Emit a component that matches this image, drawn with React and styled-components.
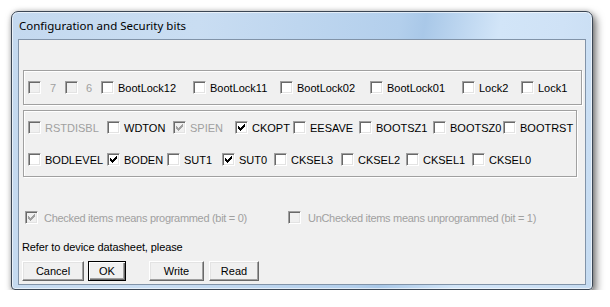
import styled, { createGlobalStyle } from 'styled-components';

const Global = createGlobalStyle`
    body{
        margin: 0;
        background: #ffffff;
        font-family: "Liberation Sans", Arial, sans-serif;
    }
`

const Window = styled.div`
    margin: 11px 0 0 11px;
    width: 582px;
    height: 279px;
    box-sizing: border-box;
    border: 1px solid #3b4654;
    border-radius: 7px 7px 4px 4px;
    background: linear-gradient(100deg, #c4d9ef 0%, #c9ddf2 30%, #b3cfec 62%, #a9c8e8 66%, #d2e5f8 78%, #cfe2f6 88%, #c5dbf1 100%);
    box-shadow: 3px 4px 9px rgba(0,0,0,0.55), 0 0 5px rgba(0,0,0,0.18), inset 0 0 0 1px rgba(255,255,255,0.6);
    display: flex;
    flex-direction: column;
    padding: 0 6px 4px 6px;
`

const TitleBar = styled.div`
    height: 27px;
    display: flex;
    align-items: center;
    padding-left: 1px;
    font-family: "Noto Sans", "Liberation Sans", sans-serif;
    font-size: 11.5px;
    color: #000;
`

const Client = styled.div`
    flex: 1;
    background: #f0f0f0;
    border: 1px solid #8193a8;
    padding: 30px 0 0 4px;
    display: flex;
    flex-direction: column;
    font-size: 11px;
`

const GroupBox = styled.div`
    width: ${p => p.w}px;
    box-sizing: border-box;
    border: 1px solid #a0a0a0;
    box-shadow: inset 1px 1px 0 #fff, 1px 1px 0 #fff;
    padding: ${p => p.pad};
    margin-bottom: 5px;
    display: flex;
    flex-direction: column;
    gap: 19px;
`

const Row = styled.div`
    display: flex;
    align-items: center;
    height: 13px;
`

const Item = styled.label`
    display: flex;
    align-items: center;
    flex: 0 0 ${p => p.w ? p.w + 'px' : 'auto'};
    color: ${p => p.off ? '#a0a0a0' : '#000'};
    letter-spacing: ${p => p.tight ? '-0.3px' : 'normal'};
    white-space: nowrap;
    span{
        margin-left: ${p => p.indent || 4}px;
    }
`

const Box = styled.span`
    width: 13px;
    height: 13px;
    box-sizing: border-box;
    flex: 0 0 13px;
    margin: 0 !important;
    border: 1px solid;
    border-color: #a0a0a0 #fff #fff #a0a0a0;
    box-shadow: inset 1px 1px 0 #696969, inset -1px -1px 0 #e3e3e3;
    background: ${p => p.off ? '#f0f0f0' : '#fff'};
    display: flex;
    align-items: center;
    justify-content: center;
    svg{ display: block; }
`

const FootRow = styled.div`
    display: flex;
    align-items: center;
    height: 13px;
    margin: 29px 0 0 2px;
`

const Note = styled.div`
    margin: 16px 0 0 -1px;
    height: 14px;
    line-height: 14px;
    letter-spacing: -0.1px;
    color: #000;
`

const Buttons = styled.div`
    display: flex;
    margin: 7px 0 0 -1px;
`

const Button = styled.button`
    width: ${p => p.w}px;
    height: 20px;
    margin-right: ${p => p.mr}px;
    box-sizing: border-box;
    font-family: "Liberation Sans", Arial, sans-serif;
    font-size: 11px;
    color: #000;
    background: #f0f0f0;
    padding: 0;
    border: 1px solid;
    border-color: ${p => p.def ? '#000' : '#fff #696969 #696969 #fff'};
    box-shadow: ${p => p.def
        ? 'inset 1px 1px 0 #fff, inset -1px -1px 0 #696969, inset -2px -2px 0 #a0a0a0'
        : 'inset -1px -1px 0 #a0a0a0, inset 1px 1px 0 #e3e3e3'};
`

const Check = ({ off }) => (
    <svg width="7" height="7" viewBox="0 0 7 7">
        <path d="M0 2h1v1h1v1h1v-1h1v-1h1v-1h1v-1h1v3h-1v1h-1v1h-1v1h-1v1h-1v-1h-1v-1h-1v-1h-1z" fill={off ? '#a0a0a0' : '#000'} />
    </svg>
)

const CheckItem = ({ label, w, checked, off, indent, tight }) => (
    <Item w={w} off={off} indent={indent} tight={tight}>
        <Box off={off}>{checked && <Check off={off} />}</Box>
        <span>{label}</span>
    </Item>
)

const row1 = [
    { label: '7', w: 37, off: true, indent: 9 },
    { label: '6', w: 36, off: true, indent: 8 },
    { label: 'BootLock12', w: 92 },
    { label: 'BootLock11', w: 87 },
    { label: 'BootLock02', w: 90 },
    { label: 'BootLock01', w: 92 },
    { label: 'Lock2', w: 59 },
    { label: 'Lock1' },
]

const row2 = [
    { label: 'RSTDISBL', w: 79, off: true },
    { label: 'WDTON', w: 66 },
    { label: 'SPIEN', w: 62, off: true, checked: true },
    { label: 'CKOPT', w: 58, checked: true },
    { label: 'EESAVE', w: 66 },
    { label: 'BOOTSZ1', w: 74 },
    { label: 'BOOTSZ0', w: 70 },
    { label: 'BOOTRST' },
]

const row3 = [
    { label: 'BODLEVEL', w: 79 },
    { label: 'BODEN', w: 60, checked: true },
    { label: 'SUT1', w: 55 },
    { label: 'SUT0', w: 52, checked: true },
    { label: 'CKSEL3', w: 67 },
    { label: 'CKSEL2', w: 65 },
    { label: 'CKSEL1', w: 66 },
    { label: 'CKSEL0' },
]

const App = () => {
    return (
        <>
            <Global />
            <Window>
                <TitleBar>Configuration and Security bits</TitleBar>
                <Client>
                    <GroupBox w={559} pad="10px 4px 10px 4px">
                        <Row>{row1.map(i => <CheckItem key={i.label} {...i} />)}</Row>
                    </GroupBox>
                    <GroupBox w={554} pad="10px 4px 10px 4px">
                        <Row>{row2.map(i => <CheckItem key={i.label} {...i} />)}</Row>
                        <Row>{row3.map(i => <CheckItem key={i.label} {...i} />)}</Row>
                    </GroupBox>
                    <FootRow>
                        <CheckItem label="Checked items means programmed (bit = 0)" w={263} off checked indent={6} tight />
                        <CheckItem label="UnChecked items means unprogrammed (bit = 1)" off indent={7} tight />
                    </FootRow>
                    <Note>Refer to device datasheet, please</Note>
                    <Buttons>
                        <Button w={62} mr={4}>Cancel</Button>
                        <Button w={38} mr={23} def>OK</Button>
                        <Button w={55} mr={5}>Write</Button>
                        <Button w={50} mr={0}>Read</Button>
                    </Buttons>
                </Client>
            </Window>
        </>
    )
}

export default App;
